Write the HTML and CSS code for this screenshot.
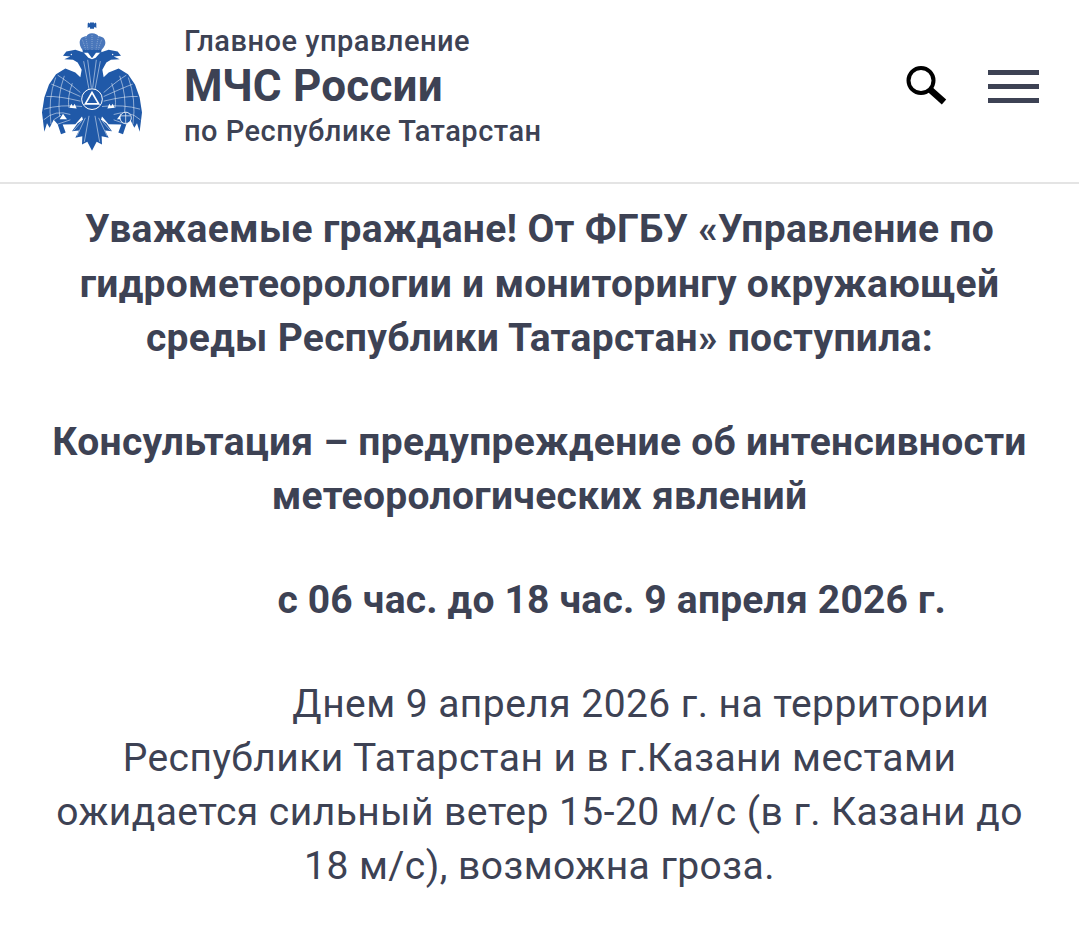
FILE: index.html
```html
<!DOCTYPE html>
<html lang="ru">
<head>
    <meta charset="UTF-8">
    <meta name="viewport" content="width=device-width, initial-scale=1.0">
    <title>Главное управление МЧС России по Республике Татарстан</title>
    <link rel="stylesheet" href="styles.css">
</head>
<body>
    <header class="top">
        <svg class="logo" viewBox="62 36 306 392" aria-hidden="true">
            <defs>
                <g id="half">
                    <path fill="#2059a8" d="M215 150L204 146 190 130 165 122 138 127 128 140 150 142 132 150 158 152 172 160 184 182 180 204 165 190 135 178 107 195 86 226 72 265 65 310 72 368 80 342 88 356 100 332 112 345 122 375 136 370 127 346 165 345 185 322 188 332 172 342 155 366 176 364 165 386 186 381 185 406 201 398 215 425z"/>
                    <g fill="none" stroke="#fff" stroke-width="1.500">
                        <path d="M180 250Q140 215 112 198M180 262Q120 235 93 225M180 276Q115 260 78 262M185 292Q120 285 71 300M150 316Q105 300 70 332"/>
                        <path d="M132 200Q110 260 118 322M156 222Q140 265 146 296M106 205Q82 270 92 345"/>
                        <path d="M190 156L206 240M202 152L213 236"/>
                        <path d="M206 320L192 398M195 326L170 380M184 336L160 364"/>
                        <path d="M100 332L122 318M112 345L150 332"/>
                    </g>
                    <path fill="#fff" d="M147 296l6-12 5 8 5-8 6 14zM118 330l10-16 12 16z"/>
                    <circle cx="153" cy="136" r="2" fill="#fff"/>
                </g>
            </defs>
            <use href="#half"/>
            <use href="#half" transform="translate(430 0) scale(-1 1)"/>
            <path fill="#2059a8" d="M209 40h12v4l4-4v0h0l3 3v14l-3-3h-4v5h-12v-5h-4l-3 3V43l3-3 4 4z"/>
            <path fill="#4a77bb" d="M215 72c-10 0-14 4-16 9-12 0-21 6-21 20 0 10 6 19 12 26h50c6-7 15-16 15-26 0-14-9-20-21-20-2-5-9-9-19-9z"/>
            <path fill="none" stroke="#fff" stroke-width="1.500" stroke-dasharray="2 4" d="M186 92q6 14 10 30M196 84q4 18 7 38M215 78v44M234 84q-4 18-7 38M244 92q-6 14-10 30"/>
            <path fill="#2059a8" d="M187 122h56v9h-56zM203 131h24l-12 16z"/>
            <circle cx="215" cy="270" r="31" fill="#2059a8" stroke="#fff" stroke-width="3"/>
            <path fill="none" stroke="#fff" stroke-width="5" d="M215 250l20 34h-40z"/>
            <circle cx="316" cy="326" r="17" fill="#2059a8" stroke="#fff" stroke-width="2.500"/>
            <path fill="none" stroke="#fff" stroke-width="2" d="M302 320h28M316 309v34"/>
        </svg>
        <a class="brand" href="#">
            <span class="brand-small">Главное управление</span>
            <span class="brand-big">МЧС России</span>
            <span class="brand-small">по Республике Татарстан</span>
        </a>
        <div class="top-icons">
            <svg class="search" viewBox="0 0 42 42" aria-hidden="true">
                <circle cx="15" cy="15.500" r="12.500" fill="none" stroke="#000" stroke-width="4"/>
                <path d="M24 24.500l14 12.500" fill="none" stroke="#000" stroke-width="6.500"/>
            </svg>
            <div class="burger"><span></span><span></span><span></span></div>
        </div>
    </header>
    <main class="news">
        <p class="b">Уважаемые граждане! От ФГБУ «Управление по гидрометеорологии и мониторингу окружающей среды Республики Татарстан» поступила:</p>
        <p class="b">Консультация – предупреждение об интенсивности метеорологических явлений</p>
        <p class="b period">&nbsp;&nbsp;&nbsp;&nbsp;&nbsp;&nbsp;&nbsp;&nbsp;&nbsp;&nbsp;&nbsp;&nbsp;&nbsp;&nbsp;с 06 час. до 18 час. 9 апреля 2026 г.</p>
        <p class="txt">&nbsp;&nbsp;&nbsp;&nbsp;&nbsp;&nbsp;&nbsp;&nbsp;&nbsp;&nbsp;&nbsp;&nbsp;&nbsp;&nbsp;&nbsp;&nbsp;&nbsp;&nbsp;&nbsp;&nbsp;Днем 9 апреля 2026 г. на территории Республики Татарстан и в г.Казани местами ожидается сильный ветер 15-20 м/с (в г. Казани до 18 м/с), возможна гроза.</p>
    </main>
</body>
</html>
```
FILE: styles.css
```css
body{
    margin:0;
    background:#fff;
    color:#3d4254;
    font-family:Roboto,"Noto Sans",sans-serif;
}
.top{
    display:flex;
    align-items:center;
    height:172px;
    padding:0 40px 10px 41px;
    border-bottom:2px solid #e4e4e4;
}
.logo{
    width:102px;
    height:131px;
    flex:none;
}
.brand{
    display:flex;
    flex-direction:column;
    margin-left:41px;
    text-decoration:none;
    color:#3d4254;
}
.brand-small{
    font-size:29px;
    font-weight:500;
    line-height:42px;
    letter-spacing:.5px;
}
.brand-big{
    font-size:44px;
    line-height:48px;
    font-weight:700;
    letter-spacing:.2px;
}
.top-icons{
    display:flex;
    align-items:center;
    gap:40px;
    margin-left:auto;
}
.search{
    width:42px;
    height:42px;
}
.burger{
    display:flex;
    flex-direction:column;
    gap:9px;
    width:51px;
}
.burger span{
    height:5px;
    background:#3d4254;
}
.news{
    padding:18px 40px 0;
    text-align:center;
    font-size:39px;
    line-height:54.500px;
}
.news p{
    margin:0 0 49px;
}
.b{
    font-weight:700;
    letter-spacing:.3px;
}
.news .period{
    margin-bottom:50px;
    padding-left:6px;
    letter-spacing:.2px;
}
.txt{
    line-height:54px;
    letter-spacing:.45px;
}
```
